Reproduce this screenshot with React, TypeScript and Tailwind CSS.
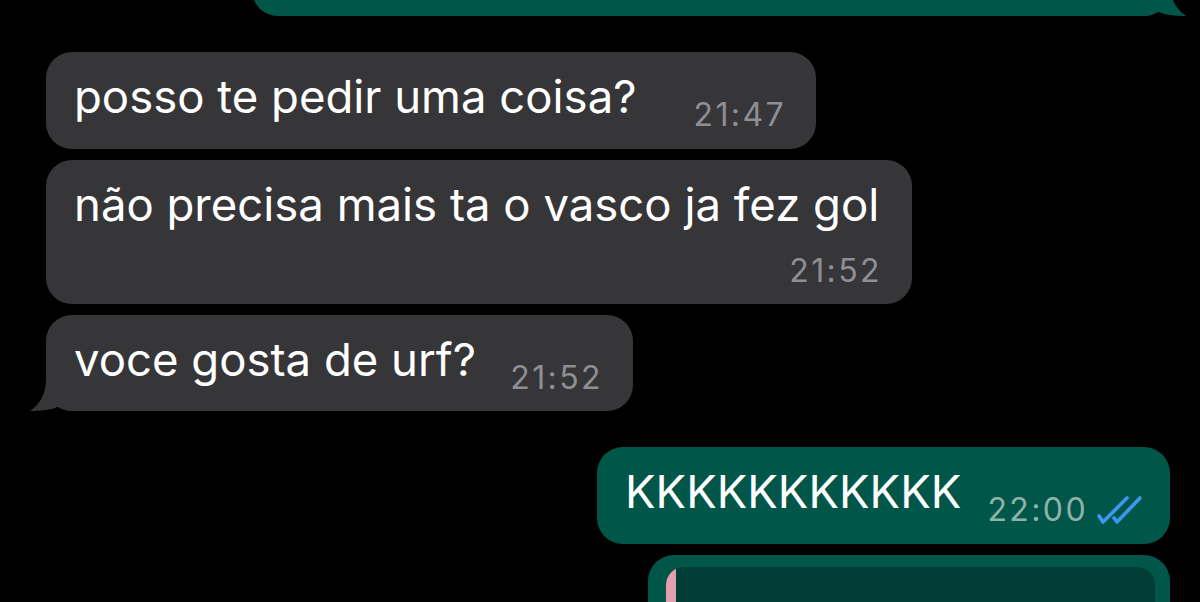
import React from 'react';

const FONT = { fontFamily: 'Inter, "Noto Sans", sans-serif' };

function TailLeft({ color }: { color: string }) {
  return (
    <svg className="absolute left-[-17px] bottom-0" width="50" height="50" viewBox="0 0 50 50">
      <path d="M17 0 H50 V50 H44 C38 50 33 48 29 45.5 C23 49 12 50 1 50 C10 44 17 34 17 18 Z" fill={color} />
    </svg>
  );
}

function TailRight({ color }: { color: string }) {
  return (
    <svg className="absolute right-[-17px] bottom-0 -scale-x-100" width="50" height="50" viewBox="0 0 50 50">
      <path d="M17 0 H50 V50 H44 C38 50 33 48 29 45.5 C23 49 12 50 1 50 C10 44 17 34 17 18 Z" fill={color} />
    </svg>
  );
}

function DoubleCheck() {
  return (
    <svg width="46" height="30" viewBox="0 0 46 30" fill="none" stroke="#3b98f0" strokeWidth="3.6" strokeLinecap="round" strokeLinejoin="round">
      <path d="M3 21 L7 27 L31 3" />
      <path d="M18 23 L21 27 L44 3" />
    </svg>
  );
}

export default function App() {
  return (
    <div className="w-[1200px] h-[602px] bg-black overflow-hidden flex flex-col text-white" style={FONT}>

      {/* previous outgoing bubble, cut at the top */}
      <div className="h-[16px] flex justify-end items-end pr-[30px]">
        <div className="relative w-[918px] h-[60px] shrink-0 bg-[#01564a] rounded-[26px]">
          <TailRight color="#01564a" />
        </div>
      </div>

      {/* incoming */}
      <div className="pl-[46px] mt-[36px] flex flex-col gap-[11px]">
        <div className="w-[770px] bg-[#363638] rounded-[26px] pl-[28px] pr-[30px] pt-[17px] pb-[18px] flex justify-between items-start">
          <span className="text-[45.5px] leading-[56px] whitespace-nowrap">posso te pedir uma coisa?</span>
          <span className="text-[32px] leading-[32px] tracking-[2.4px] text-[#8e8e93] mt-[30px]">21:47</span>
        </div>

        <div className="w-[866px] bg-[#363638] rounded-[26px] pl-[28px] pr-[30px] pt-[17px] pb-[17px] flex flex-col">
          <span className="text-[45.5px] leading-[56px] whitespace-nowrap">não precisa mais ta o vasco ja fez gol</span>
          <span className="self-end text-[32px] leading-[32px] tracking-[2.4px] text-[#8e8e93] mt-[22px]">21:52</span>
        </div>

        <div className="relative w-[587px] bg-[#363638] rounded-[26px] pl-[28px] pr-[30px] pt-[17px] pb-[17px] flex justify-between items-start">
          <span className="text-[45.5px] leading-[56px] whitespace-nowrap">voce gosta de urf?</span>
          <span className="text-[32px] leading-[32px] tracking-[2.4px] text-[#8e8e93] mt-[30px]">21:52</span>
          <TailLeft color="#363638" />
        </div>
      </div>

      {/* outgoing */}
      <div className="flex flex-col items-end pr-[30px] mt-[36px] gap-[11px]">
        <div className="w-[573px] bg-[#01564a] rounded-[26px] pl-[28px] pr-[28px] pt-[17px] pb-[18px] flex justify-between items-start">
          <span className="text-[45.5px] leading-[56px] whitespace-nowrap">KKKKKKKKKKK</span>
          <span className="flex items-center gap-[8px] mt-[30px] h-[32px]">
            <span className="text-[32px] leading-[32px] tracking-[2.4px] text-[#8db3aa]">22:00</span>
            <DoubleCheck />
          </span>
        </div>

        <div className="w-[522px] bg-[#01564a] rounded-[26px] pl-[18px] pr-[15px] pt-[12px] pb-[12px]">
          <div className="h-[100px] bg-[#003d35] rounded-[18px] overflow-hidden flex">
            <div className="w-[10px] bg-[#e3a0b1]" />
          </div>
        </div>
      </div>
    </div>
  );
}
